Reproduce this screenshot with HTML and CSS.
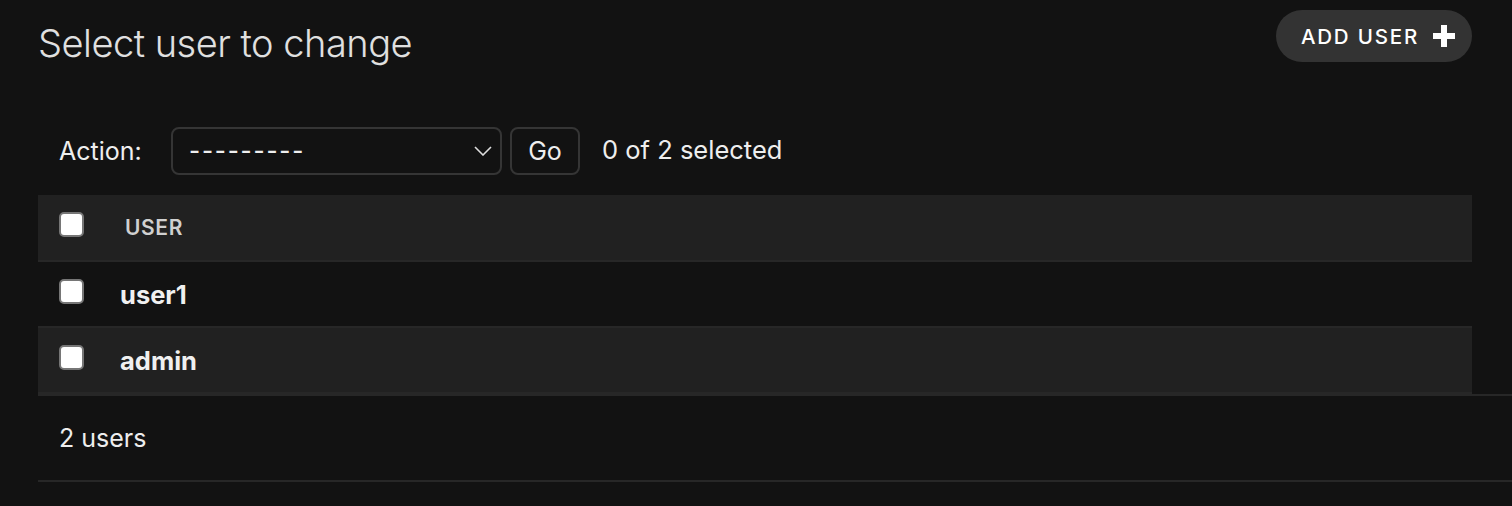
FILE: index.html
```html
<!DOCTYPE html>
<html lang="en">
<head>
<meta charset="utf-8">
<title>Select user to change</title>
<link rel="stylesheet" href="styles.css">
</head>
<body>
<div class="content">
  <div class="top">
    <h1 class="title">Select user to change</h1>
    <a class="add-btn" href="#">ADD USER
      <svg class="plus" viewBox="0 0 22 22" width="22" height="22"><path d="M8 0h6v8h8v6h-8v8H8v-8H0V8h8z" fill="#fff"/></svg>
    </a>
  </div>
  <div class="actions">
    <span class="label">Action:</span>
    <div class="select">
      <span class="sel-text">---------</span>
      <svg class="chev" viewBox="0 0 18 10" width="18" height="10"><path d="M1 1l8 8 8-8" fill="none" stroke="#ddd" stroke-width="1.6"/></svg>
    </div>
    <button class="go">Go</button>
    <span class="count">0 of 2 selected</span>
  </div>
  <div class="table">
    <div class="row head">
      <div class="cb-cell"><input type="checkbox" class="cb"></div>
      <div class="col-label">USER</div>
    </div>
    <div class="row">
      <div class="cb-cell"><input type="checkbox" class="cb"></div>
      <a class="user" href="#">user1</a>
    </div>
    <div class="row alt">
      <div class="cb-cell"><input type="checkbox" class="cb"></div>
      <a class="user" href="#">admin</a>
    </div>
  </div>
  <div class="paginator">2 users</div>
</div>
</body>
</html>
```
FILE: styles.css
```css
html, body {
  margin: 0;
  padding: 0;
  background: #121212;
  color: #eeeeee;
  font-family: Inter, "Noto Sans", "Liberation Sans", sans-serif;
  overflow: hidden;
}
.content {
  padding: 10px 40px 0 38px;
}
.top {
  display: flex;
  justify-content: space-between;
  align-items: flex-start;
  height: 107px;
}
.title {
  margin: 10px 0 0 0;
  font-size: 38px;
  font-weight: 300;
  color: #e0e0e0;
  line-height: 46px;
  letter-spacing: -0.5px;
}
.add-btn {
  display: flex;
  align-items: center;
  gap: 14px;
  height: 52px;
  padding: 0 17px 0 25px;
  border-radius: 26px;
  background: #333333;
  color: #ffffff;
  text-decoration: none;
  font-size: 20.5px;
  font-weight: 500;
  letter-spacing: 1.8px;
}
.plus { display: block; }
.actions {
  box-sizing: border-box;
  display: flex;
  align-items: center;
  height: 78px;
  padding-left: 21px;
  padding-bottom: 11px;
}
.label {
  font-size: 25px;
  color: #eeeeee;
  width: 112px;
}
.select {
  box-sizing: border-box;
  width: 331px;
  height: 48px;
  border: 2px solid #353535;
  border-radius: 8px;
  display: flex;
  align-items: center;
  justify-content: space-between;
  padding: 0 8px 0 16px;
  font-size: 24px;
}
.sel-text { letter-spacing: 1.8px; font-weight: 500; }
.go {
  box-sizing: border-box;
  margin-left: 8px;
  width: 70px;
  height: 48px;
  border: 2px solid #353535;
  border-radius: 8px;
  background: #121212;
  color: #eeeeee;
  font-family: inherit;
  font-size: 25px;
  padding: 0;
}
.count {
  margin-left: 22px;
  font-size: 25.5px;
  color: #eeeeee;
  margin-bottom: 3px;
}
.table {
  display: flex;
  flex-direction: column;
}
.row {
  display: flex;
  align-items: center;
  height: 64px;
  border-bottom: 2px solid #272727;
}
.row.head {
  height: 65px;
  background: #212121;
}
.row.alt {
  background: #212121;
}
.cb-cell {
  box-sizing: border-box;
  width: 82px;
  padding-left: 21px;
  display: flex;
  align-items: center;
  margin-top: -6px;
}
.cb {
  appearance: none;
  -webkit-appearance: none;
  margin: 0;
  box-sizing: border-box;
  width: 25px;
  height: 25px;
  background: #ffffff;
  border: 2px solid #767676;
  border-radius: 5px;
}
.col-label {
  padding-left: 5px;
  font-size: 21px;
  font-weight: 600;
  color: #d0d0d0;
  letter-spacing: 0.6px;
}
.user {
  font-size: 25.5px;
  font-weight: 700;
  color: #f0f0f0;
  text-decoration: none;
}
.paginator {
  margin-right: -40px;
  height: 84px;
  border-top: 2px solid #272727;
  border-bottom: 2px solid #272727;
  padding-left: 21px;
  display: flex;
  align-items: center;
  font-size: 25px;
  color: #eeeeee;
}
```
